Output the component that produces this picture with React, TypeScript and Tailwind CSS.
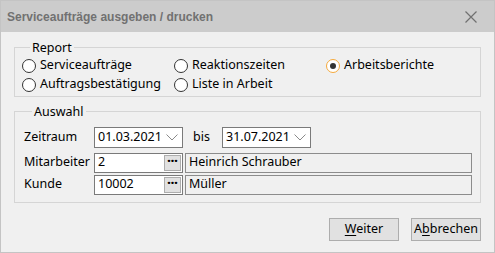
import React from "react";

const font = { fontFamily: '"Noto Sans", Arial, sans-serif' };

function Radio({ label, checked }: { label: string; checked?: boolean }) {
  return (
    <div className="flex items-center h-[19px] gap-[4px]">
      {checked ? (
        <span className="w-[14px] h-[14px] rounded-full border border-[#f5a93b] bg-white flex items-center justify-center">
          <span className="w-[6px] h-[6px] rounded-full bg-[#333]" />
        </span>
      ) : (
        <span className="w-[14px] h-[14px] rounded-full border border-[#333] bg-white" />
      )}
      <span className="text-[12.5px] text-black leading-none">{label}</span>
    </div>
  );
}

function Chevron() {
  return (
    <svg width="12" height="7" viewBox="0 0 12 7" className="mr-[4px]">
      <path d="M0.5 0.5 L6 6 L11.5 0.5" fill="none" stroke="#8a8a8a" strokeWidth="1" />
    </svg>
  );
}

function DateBox({ value }: { value: string }) {
  return (
    <div className="w-[89px] h-[21px] bg-white border border-[#7a7a7a] flex items-center justify-between pl-[3px]">
      <span className="text-[12.5px] leading-none">{value}</span>
      <Chevron />
    </div>
  );
}

function LookupRow({ label, code, name }: { label: string; code: string; name: string }) {
  return (
    <div className="flex items-center h-[21px]">
      <span className="w-[70px] text-[12.5px] leading-none">{label}</span>
      <div className="w-[89px] h-[20px] bg-white border border-[#7a7a7a] flex items-center justify-between pl-[3px] pr-[1px]">
        <span className="text-[12.5px] leading-none">{code}</span>
        <span className="w-[17px] h-[16px] bg-[#e1e1e1] border border-[#adadad] flex items-center justify-center text-[12px] font-black leading-none pb-[3px]">
          ···
        </span>
      </div>
      <div className="ml-[2px] w-[287px] h-[20px] bg-[#f0f0f0] border border-[#8c8c8c] flex items-center pl-[3px]">
        <span className="text-[12.5px] leading-none">{name}</span>
      </div>
    </div>
  );
}

export default function App() {
  return (
    <div
      className="w-[495px] h-[253px] bg-[#f0f0f0] border border-[#c4c4c4] flex flex-col text-black overflow-hidden"
      style={font}
    >
      {/* title bar */}
      <div className="h-[31px] bg-[#cccccc] flex items-center justify-between pl-[6px] pr-[17px] shrink-0">
        <span
          className="text-[12px] font-bold text-[#717171]"
          style={{ fontFamily: '"Liberation Sans", Arial, sans-serif' }}
        >
          Serviceaufträge ausgeben / drucken
        </span>
        <svg width="12" height="12" viewBox="0 0 12 12">
          <path d="M0.5 0.5 L11.5 11.5 M11.5 0.5 L0.5 11.5" stroke="#707070" strokeWidth="1.2" />
        </svg>
      </div>

      <div className="flex flex-col px-[13px] pt-[7px]">
        {/* Report */}
        <fieldset className="border border-[#d5d5d5] pl-[7px] pb-[2px] w-[467px]">
          <legend className="ml-[8px] px-[2px] text-[12.5px] leading-[17px]">Report</legend>
          <div className="grid grid-cols-[152px_152px_1fr]">
            <Radio label="Serviceaufträge" />
            <Radio label="Reaktionszeiten" />
            <Radio label="Arbeitsberichte" checked />
            <Radio label="Auftragsbestätigung" />
            <Radio label="Liste in Arbeit" />
          </div>
        </fieldset>

        {/* Auswahl */}
        <fieldset className="mt-[6px] border border-[#d5d5d5] pl-[9px] pt-[7px] pb-[7px] w-[467px]">
          <legend className="ml-[8px] px-[2px] text-[12.5px] leading-[17px]">Auswahl</legend>
          <div className="flex items-center h-[21px]">
            <span className="w-[70px] text-[12.5px] leading-none">Zeitraum</span>
            <DateBox value="01.03.2021" />
            <span className="w-[39px] pl-[10px] text-[12.5px] leading-none">bis</span>
            <DateBox value="31.07.2021" />
          </div>
          <div className="mt-[4px] flex flex-col gap-[1px]">
            <LookupRow label="Mitarbeiter" code="2" name="Heinrich Schrauber" />
            <LookupRow label="Kunde" code="10002" name="Müller" />
          </div>
        </fieldset>

        {/* buttons */}
        <div className="mt-[15px] flex justify-end gap-[12px]">
          <button className="w-[70px] h-[23px] bg-[#e1e1e1] border border-[#adadad] text-[12.5px] leading-none">
            <span className="underline underline-offset-2">W</span>eiter
          </button>
          <button className="w-[70px] h-[23px] bg-[#e1e1e1] border border-[#adadad] text-[12.5px] leading-none">
            A<span className="underline underline-offset-2">b</span>brechen
          </button>
        </div>
      </div>
    </div>
  );
}
